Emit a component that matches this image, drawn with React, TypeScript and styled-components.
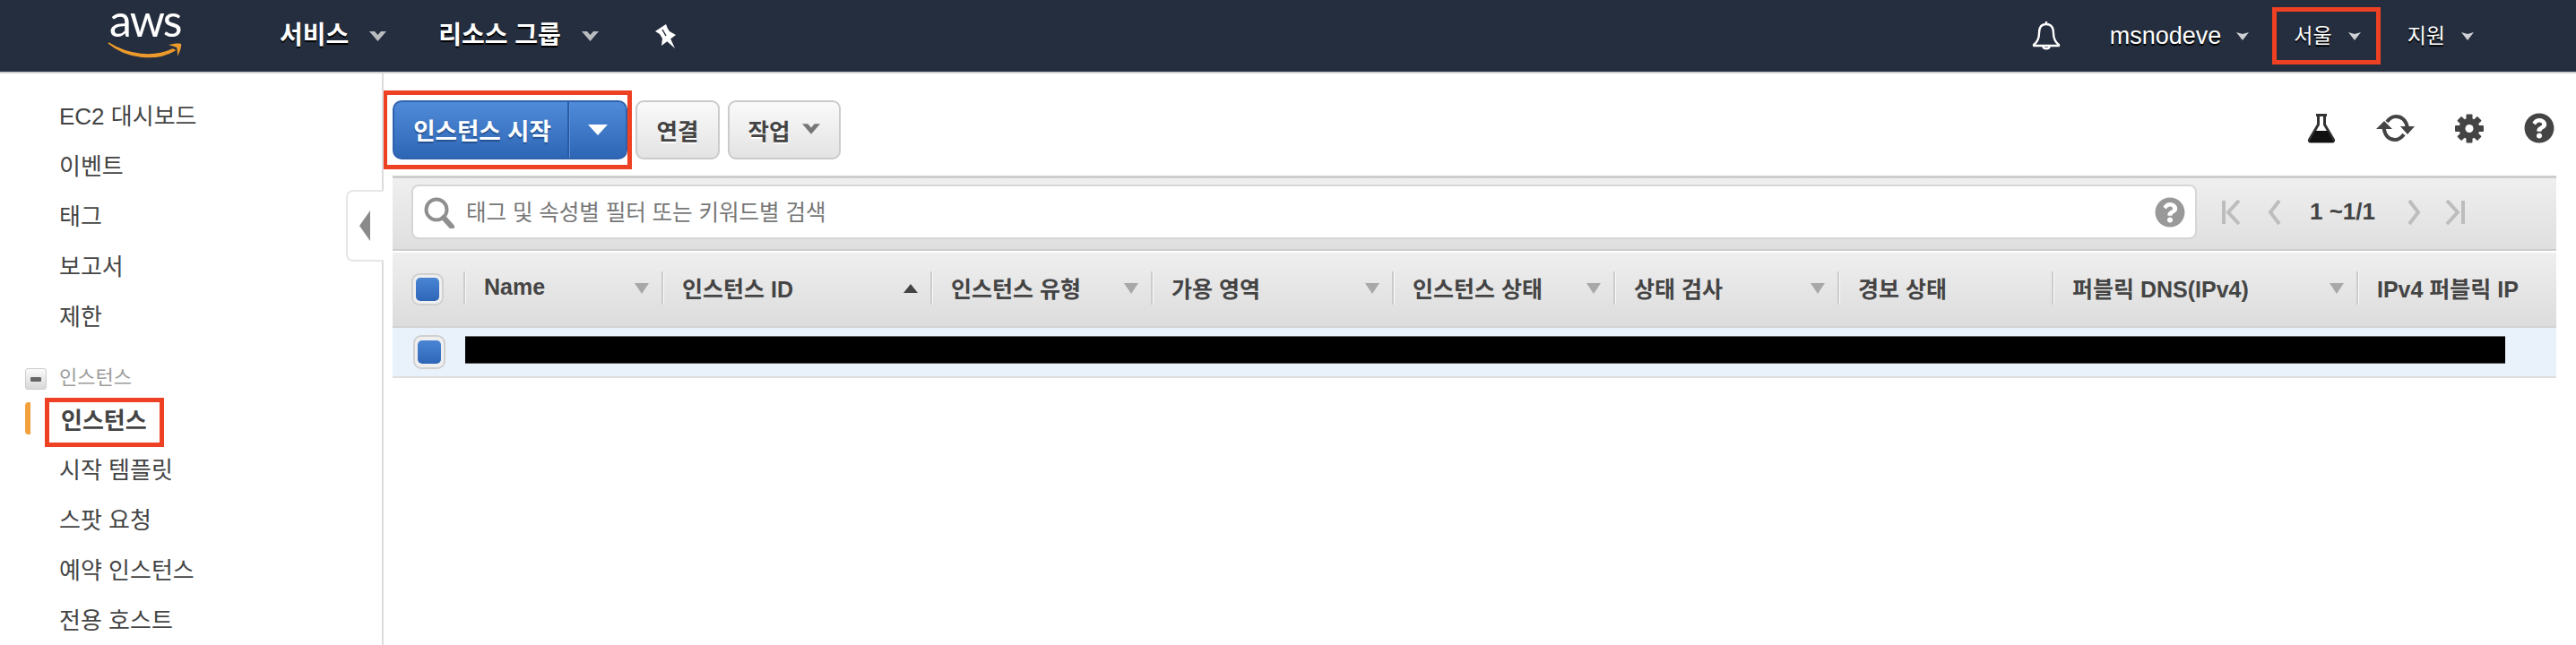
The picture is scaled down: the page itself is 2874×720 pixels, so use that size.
import React from "react";
import styled, { createGlobalStyle } from "styled-components";
import { FaQuestionCircle } from "react-icons/fa";

const Global = createGlobalStyle`
  html, body { margin: 0; padding: 0; background: #fff; }
  body { font-family: "Liberation Sans", "Noto Sans CJK KR", sans-serif; color: #444; }
  * { box-sizing: border-box; }
`;

const Page = styled.div`
  width: 2874px;
  height: 720px;
  overflow: hidden;
  display: flex;
  flex-direction: column;
`;

const TopBar = styled.header`
  height: 82px;
  flex: none;
  background: #252e3e;
  border-bottom: 2px solid #cfcfcf;
  display: flex;
  align-items: center;
  padding: 0 114px 0 120px;
  color: #fff;
`;

const Logo = styled.div`
  width: 84px;
  height: 80px;
  margin-right: 108px;
  position: relative;
  flex: none;
`;

const LogoText = styled.span`
  position: absolute;
  left: 2px;
  top: 2px;
  font-family: "Lato", sans-serif;
  font-size: 50px;
  line-height: 40px;
  letter-spacing: -2px;
  color: #fff;
`;

const LogoSmile = styled.svg`
  position: absolute;
  left: 0;
  top: 46px;
`;

const NavLabel = styled.span<{ $size?: number; $bold?: boolean }>`
  font-size: ${(p) => p.$size ?? 28}px;
  font-weight: ${(p) => (p.$bold ? 700 : 400)};
  line-height: 36px;
  text-shadow: 0 2px 1px #000;
  white-space: nowrap;
`;

const NavItem = styled.div<{ $gap?: number; $after?: number }>`
  display: flex;
  align-items: center;
  gap: ${(p) => p.$gap ?? 23}px;
  margin-right: ${(p) => p.$after ?? 58}px;
`;

const PinIcon = styled.svg`
  margin-left: 5px;
`;

const NavRight = styled.div`
  margin-left: auto;
  display: flex;
  align-items: center;
`;

const BellWrap = styled.div`
  display: flex;
  margin-right: 55px;
`;

const RegionBox = styled.div`
  display: flex;
  align-items: center;
  gap: 18px;
  height: 64px;
  border: 5px solid #ee4023;
  padding: 0 17px 0 19px;
  margin: 0 30px 0 26px;
`;

const Body = styled.div`
  flex: 1;
  display: flex;
  min-height: 0;
`;

const Sidebar = styled.nav`
  width: 428px;
  flex: none;
  border-right: 2px solid #dcdcdc;
  padding-top: 19px;
  display: flex;
  flex-direction: column;
  position: relative;
`;

const SideItem = styled.div`
  height: 56px;
  flex: none;
  display: flex;
  align-items: center;
  padding: 0 0 3px 66px;
  font-size: 26px;
  color: #444;
  white-space: nowrap;
`;

const GroupRow = styled.div`
  height: 40px;
  flex: none;
  margin-top: 19px;
  display: flex;
  align-items: center;
  padding: 0 0 2px 28px;
  gap: 14px;
  font-size: 22px;
  color: #9c9c9c;
`;

const Toggle = styled.div`
  width: 24px;
  height: 24px;
  margin-top: 8px;
  border: 1px solid #ccc;
  border-radius: 3px;
  background: linear-gradient(#fafafa, #d8d8d8);
  display: flex;
  align-items: center;
  justify-content: center;
  &::before {
    content: "";
    width: 12px;
    height: 5px;
    border-radius: 1px;
    background: #666;
  }
`;

const ActiveRow = styled.div`
  height: 56px;
  flex: none;
  display: flex;
  align-items: center;
  padding-left: 28px;
`;

const ActiveBar = styled.div`
  width: 6px;
  height: 36px;
  margin-top: -2px;
  border-radius: 4px 0 0 4px;
  background: #f2a23c;
`;

const ActiveBox = styled.div`
  width: 133px;
  height: 55px;
  margin: 7px 0 0 16px;
  flex: none;
  border: 5px solid #ee4023;
  padding: 0 0 9px 13px;
  display: flex;
  align-items: center;
  font-size: 26px;
  font-weight: 700;
  color: #444;
  white-space: nowrap;
`;

const CollapseTab = styled.div`
  position: absolute;
  right: -2px;
  top: 130px;
  width: 42px;
  height: 80px;
  background: #fff;
  border: 2px solid #e6e6e6;
  border-right: none;
  border-radius: 8px 0 0 8px;
  display: flex;
  align-items: center;
  padding-left: 13px;
  &::before {
    content: "";
    border-style: solid;
    border-width: 17px 12px 17px 0;
    border-color: transparent #8a8a8a transparent transparent;
  }
`;

const Main = styled.main`
  flex: 1;
  min-width: 0;
  padding-right: 22px;
  display: flex;
  flex-direction: column;
`;

const Toolbar = styled.div`
  height: 114px;
  flex: none;
  padding-top: 19px;
  display: flex;
  align-items: flex-start;
  margin-left: -1px;
`;

const StartBox = styled.div`
  border: 5px solid #ee4023;
  padding: 6px 0 6px 6px;
  display: flex;
  width: 278px;
  height: 88px;
  flex: none;
`;

const StartGroup = styled.div`
  width: 262px;
  height: 66px;
  border: 2px solid #2f62ad;
  border-radius: 10px;
  background: linear-gradient(#4f8bd8, #2e66b6);
  display: flex;
  color: #fff;
`;

const StartLabel = styled.div`
  width: 195px;
  border-right: 2px solid #2a5ca6;
  box-shadow: 1px 0 0 #5c90d8;
  display: flex;
  align-items: center;
  justify-content: center;
  padding: 0 0 2px 3px;
  font-size: 26.5px;
  font-weight: 700;
  text-shadow: 0 2px 1px #24508f;
  white-space: nowrap;
`;

const StartCaret = styled.div`
  flex: 1;
  display: flex;
  align-items: center;
  justify-content: center;
  &::before {
    content: "";
    border-style: solid;
    border-width: 12px 11px 0;
    border-color: #fff transparent transparent;
  }
`;

const GreyButton = styled.div<{ $width: number; $left: number }>`
  width: ${(p) => p.$width}px;
  height: 66px;
  margin: 11px 0 0 ${(p) => p.$left}px;
  flex: none;
  border: 2px solid #cbcbcb;
  border-radius: 9px;
  background: linear-gradient(#fafafa, #e3e3e3);
  display: flex;
  align-items: center;
  justify-content: center;
  gap: 14px;
  padding-bottom: 2px;
  font-size: 25.5px;
  font-weight: 700;
  color: #444;
  text-shadow: 0 2px 1px #fff;
  white-space: nowrap;
`;

const ToolIcons = styled.div`
  margin: 25px 2px 0 auto;
  display: flex;
  align-items: center;
  gap: 45px;
  color: #444;
`;

const Panel = styled.section`
  margin-left: 10px;
`;

const SearchBar = styled.div`
  height: 84px;
  border-top: 3px solid #cdcdcd;
  border-bottom: 2px solid #cdcdcd;
  background: linear-gradient(#efefef, #dfdfdf);
  padding: 7px 0 0 21px;
  display: flex;
  align-items: flex-start;
`;

const SearchInput = styled.div`
  width: 1992px;
  height: 61px;
  flex: none;
  background: #fff;
  border: 2px solid #d6d6d6;
  border-radius: 8px;
  padding: 0 11px 0 11px;
  display: flex;
  align-items: center;
  color: #8c8c8c;
`;

const Placeholder = styled.span`
  margin: 0 0 3px 12px;
  flex: 1;
  font-size: 24.5px;
  color: #777;
  white-space: nowrap;
`;

const Pager = styled.div`
  height: 61px;
  margin-left: 28px;
  display: flex;
  align-items: center;
  gap: 30px;
  color: #bdbdbd;
`;

const PageText = styled.span`
  padding: 0 6px 0 2px;
  font-size: 26px;
  font-weight: 700;
  color: #444;
  white-space: nowrap;
`;

const LastIcon = styled.svg`
  margin-left: -3px;
`;

const HeaderRow = styled.div`
  margin-top: 2px;
  height: 84px;
  border-bottom: 2px solid #d2d2d2;
  background: linear-gradient(#efefef, #dcdcdc);
  padding-top: 21px;
  display: flex;
  align-items: flex-start;
  overflow: hidden;
`;

const CheckCell = styled.div`
  width: 79px;
  flex: none;
  padding-left: 21px;
  padding-top: 2px;
`;

const CheckFrame = styled.div<{ $h?: number }>`
  width: 36px;
  height: ${(p) => p.$h ?? 36}px;
  border: 2px solid #d0d0d0;
  border-radius: 9px;
  background: #efefef;
  display: flex;
  align-items: center;
  justify-content: center;
  &::before {
    content: "";
    width: 26px;
    height: 26px;
    border-radius: 5px;
    background: linear-gradient(#4a85d4, #2f66b8);
  }
`;

const ColCell = styled.div<{ $w: number }>`
  width: ${(p) => p.$w}px;
  height: 37px;
  flex: none;
  border-left: 2px solid #cccccc;
  box-shadow: inset 1px 0 0 #fafafa;
  padding: 0 14px 2px 21px;
  display: flex;
  align-items: center;
  justify-content: space-between;
  font-size: 25px;
  font-weight: 700;
  color: #444;
  white-space: nowrap;
`;

const SortArrow = styled.span<{ $up?: boolean }>`
  flex: none;
  margin-top: 2px;
  border-style: solid;
  border-color: transparent;
  ${(p) =>
    p.$up
      ? "border-width: 0 8px 10px; border-bottom-color: #444;"
      : "border-width: 12px 8px 0; border-top-color: #a8a8a8;"}
`;

const DataRow = styled.div`
  height: 56px;
  background: #e9f1fb;
  border-bottom: 2px solid #dedede;
  padding: 8px 0 0 23px;
  display: flex;
  align-items: flex-start;
`;

const Redaction = styled.div`
  width: 2276px;
  height: 31px;
  margin: 1px 0 0 22px;
  background: #000;
  border-top: 1px solid #666;
  border-bottom: 1px solid #555;
  flex: none;
`;

const columns: { label: string; w: number; sort?: "up" | "down" }[] = [
  { label: "Name", w: 221, sort: "down" },
  { label: "인스턴스 ID", w: 300, sort: "up" },
  { label: "인스턴스 유형", w: 246, sort: "down" },
  { label: "가용 영역", w: 269, sort: "down" },
  { label: "인스턴스 상태", w: 247, sort: "down" },
  { label: "상태 검사", w: 250, sort: "down" },
  { label: "경보 상태", w: 239 },
  { label: "퍼블릭 DNS(IPv4)", w: 340, sort: "down" },
  { label: "IPv4 퍼블릭 IP", w: 223 },
];

const BigChevron = ({ fill = "#b9bcc0", w = 19, h = 11 }: { fill?: string; w?: number; h?: number }) => (
  <svg width={w} height={h} viewBox="0 0 19 11">
    <path d="M0 0h6l3.5 4L13 0h6L9.500 11z" fill={fill} />
  </svg>
);

const SmallCaret = () => (
  <svg width="14" height="9" viewBox="0 0 14 9">
    <path d="M0 0l7 2 7-2-7 9z" fill="#cfd1d4" />
  </svg>
);

const Pin = () => (
  <PinIcon width="24" height="27" viewBox="0 0 24 27">
    <path d="M0 8L12 0l2 5 2 3 7 4L7 24l1-8-3-5z" fill="#fff" />
    <path d="M13 19l4-3 5 11z" fill="#fff" />
    <path d="M8 6l4 7" stroke="#252e3e" strokeWidth="1.500" />
  </PinIcon>
);

const Bell = () => (
  <svg width="32" height="36" viewBox="0 0 32 36" fill="none" stroke="#fff" strokeWidth="2.400">
    <path d="M16 2v3M16 5c-6 0-8 4-8 10 0 7-2 10-6 13v1h28v-1c-4-3-6-6-6-13 0-6-2-10-8-10z" strokeLinejoin="round" />
    <path d="M12.500 30c0 3 7 3 7 0" />
  </svg>
);

const Flask = () => (
  <svg width="32" height="33" viewBox="0 0 32 33">
    <path d="M10 1.500h12M12.500 2v10L2.500 29c-.5 1 0 2 1.500 2h24c1.500 0 2-1 1.500-2L19.500 12V2" fill="none" stroke="#333" strokeWidth="3" />
    <path d="M9 19h14l7 13H2z" fill="#111" />
  </svg>
);

const Refresh = () => (
  <svg width="43" height="32" viewBox="0 0 43 32" fill="none">
    <path d="M12 9C15 5 18 3 22 3c6 0 11 4 13 12" stroke="#444" strokeWidth="4" />
    <path d="M31 23c-3 4-6 6-10 6-6 0-11-4-12.500-13" stroke="#444" strokeWidth="4" />
    <path d="M0 17l9-9 9 9zM27 14h16l-8 9z" fill="#444" />
  </svg>
);

const Gear = () => (
  <svg width="32" height="33" viewBox="0 0 32 33">
    <g fill="#444" transform="translate(16 16.500)">
      {[0, 45, 90, 135].map((a) => (
        <rect key={a} x="-3.500" y="-16" width="7" height="32" rx="1" transform={`rotate(${a})`} />
      ))}
      <circle r="11.500" />
      <circle r="4.500" fill="#fff" />
    </g>
  </svg>
);

const SearchGlass = () => (
  <svg width="36" height="36" viewBox="0 0 36 36" fill="none" stroke="#8f8f8f">
    <circle cx="15" cy="15" r="11.500" strokeWidth="4" />
    <path d="M23 24l9 10" strokeWidth="6" strokeLinecap="round" />
  </svg>
);

const Chevron = ({ d, w }: { d: string; w: number }) => (
  <svg width={w} height="28" viewBox={`0 0 ${w} 28`} fill="none" stroke="currentColor" strokeWidth="4">
    <path d={d} />
  </svg>
);

export default function App() {
  return (
    <Page>
      <Global />
      <TopBar>
        <Logo>
          <LogoText>aws</LogoText>
          <LogoSmile width="84" height="20" viewBox="0 0 84 20">
            <path d="M1 2c22 14 50 17 72 7l2 1C55 22 22 20 1 2z" fill="#ec9a2b" stroke="#ec9a2b" strokeWidth="1.500" />
            <path d="M68 4c5-1 11-2 14-1 1 3-2 10-4 14 0-4 0-8-1-10-2-1-6-2-9-3z" fill="#ec9a2b" />
          </LogoSmile>
        </Logo>
        <NavItem>
          <NavLabel $bold>서비스</NavLabel>
          <BigChevron />
        </NavItem>
        <NavItem $after={58}>
          <NavLabel $bold>리소스 그룹</NavLabel>
          <BigChevron />
        </NavItem>
        <Pin />
        <NavRight>
          <BellWrap>
            <Bell />
          </BellWrap>
          <NavItem $gap={17} $after={0}>
            <NavLabel $size={27}>msnodeve</NavLabel>
            <SmallCaret />
          </NavItem>
          <RegionBox>
            <NavLabel $size={23}>서울</NavLabel>
            <SmallCaret />
          </RegionBox>
          <NavItem $gap={18} $after={0}>
            <NavLabel $size={23}>지원</NavLabel>
            <SmallCaret />
          </NavItem>
        </NavRight>
      </TopBar>
      <Body>
        <Sidebar>
          <SideItem>EC2 대시보드</SideItem>
          <SideItem>이벤트</SideItem>
          <SideItem>태그</SideItem>
          <SideItem>보고서</SideItem>
          <SideItem>제한</SideItem>
          <GroupRow>
            <Toggle />
            인스턴스
          </GroupRow>
          <ActiveRow>
            <ActiveBar />
            <ActiveBox>인스턴스</ActiveBox>
          </ActiveRow>
          <SideItem>시작 템플릿</SideItem>
          <SideItem>스팟 요청</SideItem>
          <SideItem>예약 인스턴스</SideItem>
          <SideItem>전용 호스트</SideItem>
          <CollapseTab />
        </Sidebar>
        <Main>
          <Toolbar>
            <StartBox>
              <StartGroup>
                <StartLabel>인스턴스 시작</StartLabel>
                <StartCaret />
              </StartGroup>
            </StartBox>
            <GreyButton $width={94} $left={4}>연결</GreyButton>
            <GreyButton $width={126} $left={9}>
              작업
              <BigChevron fill="#777" w={20} h={12} />
            </GreyButton>
            <ToolIcons>
              <Flask />
              <Refresh />
              <Gear />
              <FaQuestionCircle size={34} />
            </ToolIcons>
          </Toolbar>
          <Panel>
            <SearchBar>
              <SearchInput>
                <SearchGlass />
                <Placeholder>태그 및 속성별 필터 또는 키워드별 검색</Placeholder>
                <FaQuestionCircle size={34} color="#999" />
              </SearchInput>
              <Pager>
                <Chevron w={21} d="M2 1v26M19 1L7 14l12 13" />
                <Chevron w={15} d="M13 1L3 14l10 13" />
                <PageText>1 ~1/1</PageText>
                <Chevron w={15} d="M2 1l10 13L2 27" />
                <LastIcon width="22" height="28" viewBox="0 0 22 28" fill="none" stroke="currentColor" strokeWidth="4">
                  <path d="M2 1l12 13L2 27M20 1v26" />
                </LastIcon>
              </Pager>
            </SearchBar>
            <HeaderRow>
              <CheckCell>
                <CheckFrame />
              </CheckCell>
              {columns.map((c) => (
                <ColCell key={c.label} $w={c.w}>
                  {c.label}
                  {c.sort && <SortArrow $up={c.sort === "up"} />}
                </ColCell>
              ))}
            </HeaderRow>
            <DataRow>
              <CheckFrame $h={38} />
              <Redaction />
            </DataRow>
          </Panel>
        </Main>
      </Body>
    </Page>
  );
}
